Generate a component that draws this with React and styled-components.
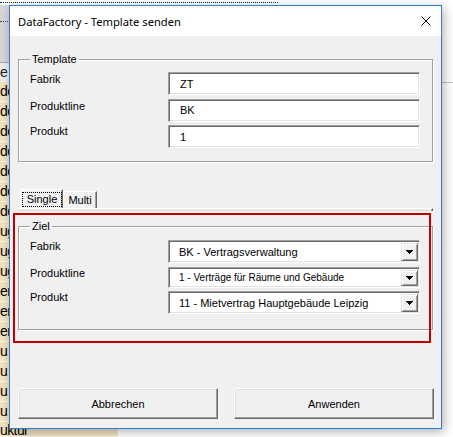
import React from 'react';
import styled, { createGlobalStyle } from 'styled-components';

const GlobalStyle = createGlobalStyle`
  html, body {
    margin: 0;
    padding: 0;
    background: #fff;
  }
  body {
    width: 453px;
    height: 437px;
    overflow: hidden;
  }
`;

const uiFont = `"Liberation Sans", Arial, sans-serif`;

const sheetRows = [
  'de', 'de', 'de', 'de', 'de', 'de', 'de',
  'ug', 'ug', 'ug',
  'er', 'er', 'er',
  'u', 'u', 'u', 'u',
  'uktur',
];

const App = () => (
  <Screen>
    <GlobalStyle />
    <TopBand>
      <DottedRule />
    </TopBand>
    <SheetArea>
      <SheetColumn>
        <SheetHeader>
          <HeaderDots />
        </SheetHeader>
        <HeadCell>e</HeadCell>
        {sheetRows.map((t, i) => (
          <Cell key={i} $last={i === sheetRows.length - 1}>{t}</Cell>
        ))}
      </SheetColumn>
      <SheetRest>
        <RestRule />
      </SheetRest>
    </SheetArea>

    <Window>
      <TitleBar>
        <Title>DataFactory - Template senden</Title>
        <CloseIcon width="10" height="10" viewBox="0 0 10 10">
          <path d="M0.5 0.5 L9.5 9.5 M9.5 0.5 L0.5 9.5" stroke="#000" strokeWidth="1" fill="none" />
        </CloseIcon>
      </TitleBar>

      <Body>
        <Frame $h={103}>
          <Caption>Template</Caption>
          <Row>
            <Label $pt={1}>Fabrik</Label>
            <TextBox>ZT</TextBox>
          </Row>
          <Row>
            <Label $pt={1}>Produktline</Label>
            <TextBox>BK</TextBox>
          </Row>
          <Row>
            <Label $pt={0}>Produkt</Label>
            <TextBox>1</TextBox>
          </Row>
        </Frame>

        <TabStrip>
          <Tab $active $w={43}>
            <FocusBox>Single</FocusBox>
          </Tab>
          <Tab $w={34}>Multi</Tab>
        </TabStrip>
        <TabPageTop />

        <Frame $h={104} $top={15} $pad={13}>
          <Caption>Ziel</Caption>
          <Row>
            <Label>Fabrik</Label>
            <Combo $h={23}>
              <ComboText>BK - Vertragsverwaltung</ComboText>
              <DropButton>
                <svg width="7" height="4" viewBox="0 0 7 4" shapeRendering="crispEdges">
                  <polygon points="0,0 7,0 3.5,4" fill="#000" />
                </svg>
              </DropButton>
            </Combo>
          </Row>
          <Row>
            <Label>Produktline</Label>
            <Combo $h={21} $small>
              <ComboText>1 - Verträge für Räume und Gebäude</ComboText>
              <DropButton>
                <svg width="7" height="4" viewBox="0 0 7 4" shapeRendering="crispEdges">
                  <polygon points="0,0 7,0 3.5,4" fill="#000" />
                </svg>
              </DropButton>
            </Combo>
          </Row>
          <Row>
            <Label>Produkt</Label>
            <Combo $h={23}>
              <ComboText>11 - Mietvertrag Hauptgebäude Leipzig</ComboText>
              <DropButton>
                <svg width="7" height="4" viewBox="0 0 7 4" shapeRendering="crispEdges">
                  <polygon points="0,0 7,0 3.5,4" fill="#000" />
                </svg>
              </DropButton>
            </Combo>
          </Row>
        </Frame>

        <ButtonRow>
          <Button>Abbrechen</Button>
          <Button>Anwenden</Button>
        </ButtonRow>

        <RedMark />
      </Body>
    </Window>
  </Screen>
);

const Screen = styled.div`
  position: relative;
  width: 453px;
  height: 437px;
  overflow: hidden;
  background: #fff;
  display: flex;
  flex-direction: column;
  font-family: ${uiFont};
`;

const TopBand = styled.div`
  flex: none;
  height: 5px;
`;

const DottedRule = styled.div`
  width: 278px;
  margin-top: 2px;
  border-top: 1px dotted #222;
`;

const SheetArea = styled.div`
  flex: 1;
  display: flex;
  min-height: 0;
`;

const SheetColumn = styled.div`
  width: 118px;
  display: flex;
  flex-direction: column;
`;

const SheetHeader = styled.div`
  flex: none;
  height: 57px;
  box-sizing: border-box;
  padding-top: 16px;
  background: #d6d6d6;
`;

const HeaderDots = styled.div`
  border-top: 1px dotted #444;
`;

const HeadCell = styled.div`
  flex: none;
  height: 20px;
  box-sizing: border-box;
  border-top: 1px solid #a9a9a9;
  background: #ededed;
  font-size: 14px;
  line-height: 19px;
  color: #222;
`;

const Cell = styled.div`
  flex: none;
  height: ${(p) => (p.$last ? 15 : 20)}px;
  box-sizing: border-box;
  border-bottom: 1px solid #fbf6ea;
  background: #f2e2c1;
  font-size: 14px;
  line-height: ${(p) => (p.$last ? 17 : 19)}px;
  letter-spacing: -0.6px;
  color: #000;
  white-space: nowrap;
`;

const SheetRest = styled.div`
  flex: 1;
`;

const RestRule = styled.div`
  margin-top: 77px;
  border-top: 1px solid #c4c4c4;
`;

const Window = styled.div`
  position: absolute;
  left: 9px;
  top: 5px;
  width: 433px;
  height: 424px;
  box-sizing: border-box;
  border: 1px solid #2b80d5;
  background: #f0f0f0;
  box-shadow: 2px 3px 10px rgba(0, 0, 0, 0.3);
  display: flex;
  flex-direction: column;
`;

const TitleBar = styled.div`
  flex: none;
  height: 30px;
  background: #fff;
  display: flex;
  align-items: center;
  justify-content: space-between;
  padding: 0 10px 0 8px;
`;

const Title = styled.span`
  font-family: "Noto Sans", "Liberation Sans", sans-serif;
  font-size: 11.2px;
  color: #000;
`;

const CloseIcon = styled.svg`
  display: block;
`;

const Body = styled.div`
  position: relative;
  flex: 1;
  display: flex;
  flex-direction: column;
  padding: 23px 8px 0 8px;
`;

const Frame = styled.div`
  position: relative;
  flex: none;
  height: ${(p) => p.$h}px;
  margin-top: ${(p) => p.$top || 0}px;
  box-sizing: border-box;
  border: 1px solid #a0a0a0;
  box-shadow: 1px 1px 0 #fff, inset 1px 1px 0 #fff;
  padding: ${(p) => p.$pad || 12}px 0 0 11px;
  display: flex;
  flex-direction: column;
  gap: 3.5px;
`;

const Caption = styled.span`
  position: absolute;
  top: -7px;
  left: 11px;
  padding: 0 2px;
  background: #f0f0f0;
  font-size: 11px;
  line-height: 13px;
  color: #000;
`;

const Row = styled.div`
  display: flex;
  align-items: flex-start;
`;

const Label = styled.div`
  width: 138px;
  padding-top: ${(p) => p.$pt || 0}px;
  font-size: 11px;
  line-height: 13px;
  color: #000;
`;

const sunken = `
  box-sizing: border-box;
  background: #fff;
  border-style: solid;
  border-width: 1px;
  border-color: #a0a0a0 #fff #fff #a0a0a0;
  box-shadow: inset 1px 1px 0 #696969, inset -1px -1px 0 #e3e3e3;
`;

const TextBox = styled.div`
  ${sunken}
  width: 252px;
  height: 23px;
  padding-left: 11px;
  display: flex;
  align-items: center;
  font-size: 11px;
  color: #000;
`;

const Combo = styled.div`
  ${sunken}
  width: 252px;
  height: ${(p) => p.$h}px;
  padding: 2px 1px 1px 10px;
  display: flex;
  align-items: stretch;
  font-size: ${(p) => (p.$small ? 10 : 11)}px;
  color: #000;
`;

const ComboText = styled.span`
  flex: 1;
  display: flex;
  align-items: center;
  white-space: nowrap;
  overflow: hidden;
`;

const DropButton = styled.div`
  width: 17px;
  box-sizing: border-box;
  background: #f0f0f0;
  border-style: solid;
  border-width: 1px;
  border-color: #e3e3e3 #696969 #696969 #e3e3e3;
  box-shadow: inset 1px 1px 0 #fff, inset -1px -1px 0 #a0a0a0;
  display: flex;
  align-items: center;
  justify-content: center;

  svg {
    display: block;
  }
`;

const TabStrip = styled.div`
  flex: none;
  height: 19px;
  margin: 27px 0 0 2px;
  display: flex;
  align-items: flex-end;
`;

const Tab = styled.div`
  box-sizing: border-box;
  width: ${(p) => p.$w}px;
  height: ${(p) => (p.$active ? 19 : 17)}px;
  border-top: 1px solid #fff;
  border-left: 1px solid #fff;
  border-right: 1px solid #696969;
  box-shadow: inset -1px 0 0 #a0a0a0;
  display: flex;
  align-items: center;
  justify-content: ${(p) => (p.$active ? 'flex-start' : 'center')};
  padding-left: ${(p) => (p.$active ? 1 : 0)}px;
  font-size: 11px;
  color: #000;
`;

const FocusBox = styled.span`
  box-sizing: border-box;
  width: 40px;
  height: 15px;
  border: 1px dotted #000;
  display: flex;
  align-items: center;
  justify-content: center;
  line-height: 12px;
`;

const TabPageTop = styled.div`
  flex: none;
  height: 3px;
  box-sizing: border-box;
  border-top: 1px solid #fff;
  border-right: 1px solid #696969;
  box-shadow: inset -1px 0 0 #a0a0a0, inset 0 -1px 0 #d8d8d8;
`;

const ButtonRow = styled.div`
  flex: none;
  margin-top: 58px;
  display: flex;
  gap: 16px;
`;

const Button = styled.div`
  flex: none;
  width: 200px;
  height: 31px;
  box-sizing: border-box;
  background: #f0f0f0;
  border-style: solid;
  border-width: 1px;
  border-color: #fff #696969 #696969 #fff;
  box-shadow: inset -1px -1px 0 #a0a0a0, inset 1px 1px 0 #e3e3e3;
  display: flex;
  align-items: center;
  justify-content: center;
  font-size: 11px;
  color: #000;
`;

const RedMark = styled.div`
  position: absolute;
  left: 3px;
  top: 177px;
  width: 418px;
  height: 130px;
  box-sizing: border-box;
  border: 2px solid #c00000;
  pointer-events: none;
`;

export default App;
